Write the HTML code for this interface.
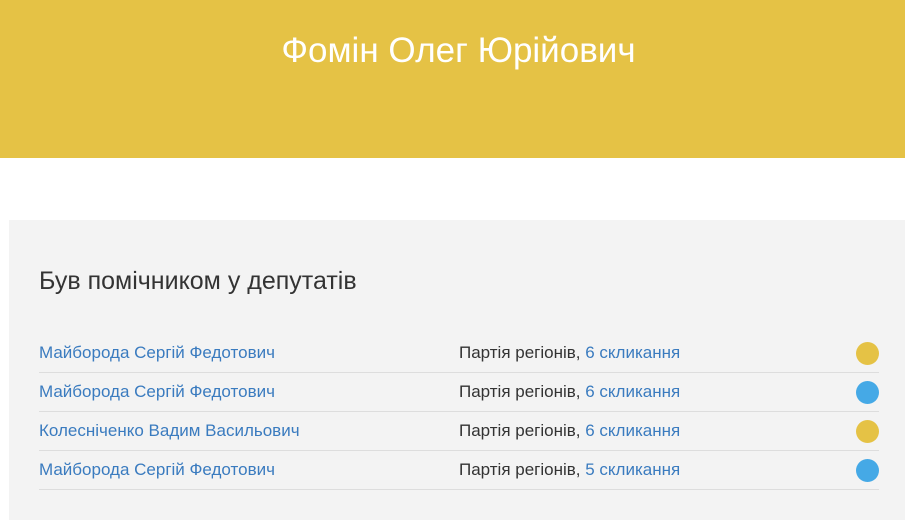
<!DOCTYPE html>
<html><head><meta charset="utf-8"><style>
body{margin:0;width:905px;height:504px;overflow:hidden;background:#fff;font-family:"Liberation Sans",sans-serif}
.h{position:absolute;left:0;top:0;width:905px;height:158px;background:#e5c245}
.h div{position:absolute;left:0;right:0;top:31px;text-align:center;color:#fff;font-size:35px;padding-left:12px}
.p{position:absolute;left:9px;top:220px;width:896px;height:300px;background:#f3f3f3}
h2{position:absolute;left:39px;top:267px;margin:0;font-weight:normal;font-size:25px;color:#333}
.r{position:absolute;left:39px;width:840px;height:38px;border-bottom:1px solid #ddd;font-size:17px;line-height:38px}
.r a{color:#3a7bbf;text-decoration:none}
.r .m{position:absolute;left:420px;top:0;color:#333}
.r .c{position:absolute;right:0;top:8px;width:23px;height:23px;border-radius:50%}
</style></head><body>
<div class="h"><div>Фомін Олег Юрійович</div></div>
<div class="p"></div>
<h2>Був помічником у депутатів</h2>
<div class="r" style="top:334px"><a>Майборода Сергій Федотович</a><span class="m">Партія регіонів, <a>6 скликання</a></span><span class="c" style="background:#e5c245"></span></div>
<div class="r" style="top:373px"><a>Майборода Сергій Федотович</a><span class="m">Партія регіонів, <a>6 скликання</a></span><span class="c" style="background:#45a9e6"></span></div>
<div class="r" style="top:412px"><a>Колесніченко Вадим Васильович</a><span class="m">Партія регіонів, <a>6 скликання</a></span><span class="c" style="background:#e5c245"></span></div>
<div class="r" style="top:451px"><a>Майборода Сергій Федотович</a><span class="m">Партія регіонів, <a>5 скликання</a></span><span class="c" style="background:#45a9e6"></span></div>
</body></html>
